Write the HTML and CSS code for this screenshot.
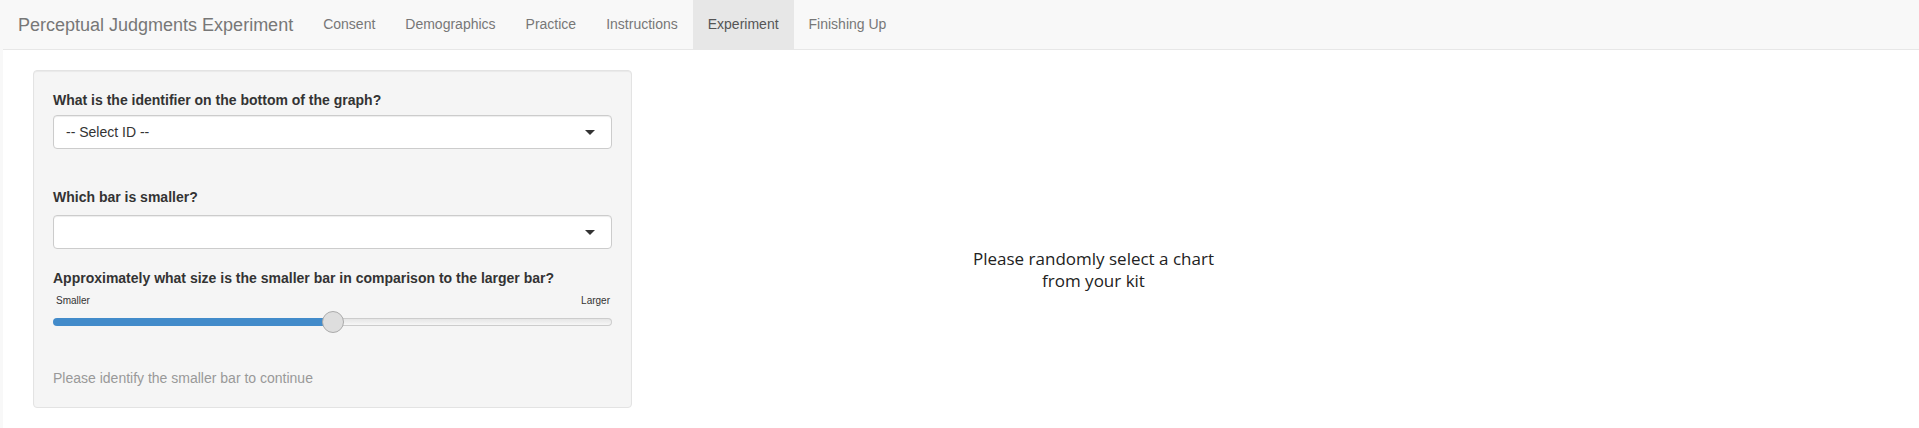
FILE: index.html
```html
<!DOCTYPE html>
<html lang="en">
<head>
<meta charset="utf-8">
<title>Perceptual Judgments Experiment</title>
<link rel="stylesheet" href="styles.css">
</head>
<body>
<div class="page">
  <nav class="navbar">
    <span class="brand">Perceptual Judgments Experiment</span>
    <ul class="nav">
      <li><a>Consent</a></li>
      <li><a>Demographics</a></li>
      <li><a>Practice</a></li>
      <li><a>Instructions</a></li>
      <li class="active"><a>Experiment</a></li>
      <li><a>Finishing Up</a></li>
    </ul>
  </nav>
  <main class="main">
    <div class="sidebar">
      <div class="well">
        <div class="form-group g1">
          <label class="lbl">What is the identifier on the bottom of the graph?</label>
          <div class="select"><span class="select-text">-- Select ID --</span><span class="caret"></span></div>
        </div>
        <div class="form-group g2">
          <label class="lbl">Which bar is smaller?</label>
          <div class="select"><span class="select-text"></span><span class="caret"></span></div>
        </div>
        <div class="form-group g3">
          <label class="lbl">Approximately what size is the smaller bar in comparison to the larger bar?</label>
          <div class="slider">
            <div class="slider-labels"><span>Smaller</span><span>Larger</span></div>
            <div class="track">
              <div class="fill" style="width: 50%"></div>
              <div class="rest"></div>
              <div class="thumb" style="left: 50%"></div>
            </div>
          </div>
        </div>
        <p class="hint">Please identify the smaller bar to continue</p>
      </div>
    </div>
    <div class="plot">
      <p class="plot-msg">Please randomly select a chart<br>from your kit</p>
    </div>
  </main>
</div>
</body>
</html>
```

FILE: styles.css
```css
* { box-sizing: border-box; }

html, body {
  margin: 0;
  padding: 0;
  overflow: hidden;
}

body {
  background: #f8f8f8;
  font-family: "Liberation Sans", Arial, Helvetica, sans-serif;
  font-size: 14px;
  line-height: 20px;
  color: #333;
}

.page {
  margin-left: 3px;
  background: #fff;
  height: 428px;
}

.navbar {
  display: flex;
  align-items: stretch;
  height: 50px;
  background: #f8f8f8;
  border-bottom: 1px solid #e7e7e7;
}

.brand {
  padding: 15px;
  font-size: 18px;
  line-height: 20px;
  color: #777;
}

.nav {
  display: flex;
  list-style: none;
  margin: 0;
  padding: 0;
}

.nav li a {
  display: block;
  padding: 15px;
  line-height: 19px;
  color: #777;
}

.nav li.active a {
  background: #e7e7e7;
  color: #555;
}

.main {
  display: flex;
  align-items: flex-start;
  padding-top: 20px;
}

.sidebar {
  margin-left: 30px;
  width: 599px;
  flex: none;
}

.well {
  background: #f5f5f5;
  border: 1px solid #e3e3e3;
  border-radius: 4px;
  box-shadow: inset 0 1px 1px rgba(0, 0, 0, 0.05);
  padding: 19px;
  height: 338px;
}

.lbl {
  display: block;
  font-weight: bold;
  margin-bottom: 5px;
}

.g1 { margin-bottom: 38px; }
.g2 .lbl { margin-bottom: 8px; }
.g2 { margin-bottom: 19px; }

.select {
  position: relative;
  height: 34px;
  background: #fff;
  border: 1px solid #ccc;
  border-radius: 4px;
  box-shadow: inset 0 1px 1px rgba(0, 0, 0, 0.075);
  padding: 6px 12px;
  display: flex;
  align-items: center;
}

.select-text {
  color: #333;
  line-height: 20px;
}

.caret {
  position: absolute;
  right: 16px;
  top: 14px;
  width: 0;
  height: 0;
  border-style: solid;
  border-width: 5px 5px 0 5px;
  border-color: #333 transparent transparent transparent;
}

.slider {
  padding-top: 2px;
}

.slider-labels {
  display: flex;
  justify-content: space-between;
  font-size: 10px;
  line-height: 12px;
  color: #333;
  padding: 0 2px 0 3px;
}

.track {
  position: relative;
  display: flex;
  height: 8px;
  margin-top: 11px;
}

.fill {
  background: #428bca;
  border-radius: 4px 0 0 4px;
}

.rest {
  flex: 1;
  border: 1px solid #ccc;
  border-left: none;
  border-radius: 0 4px 4px 0;
  background: linear-gradient(to bottom, #ddd -50%, #fff 150%);
}

.thumb {
  position: absolute;
  top: -7px;
  width: 22px;
  height: 22px;
  margin-left: -11px;
  border-radius: 50%;
  border: 1px solid #ababab;
  background: #dedede;
}

.hint {
  margin: 42px 0 0;
  color: #999;
  font-size: 14px;
  line-height: 20px;
}

.plot {
  margin-left: 15px;
  width: 893px;
  height: 358px;
  flex: none;
  padding-top: 178px;
  text-align: center;
}

.plot-msg {
  margin: 0;
  text-align: center;
  font-family: "Open Sans", "Noto Sans", sans-serif;
  font-size: 17px;
  line-height: 22px;
  color: #222;
}
```
